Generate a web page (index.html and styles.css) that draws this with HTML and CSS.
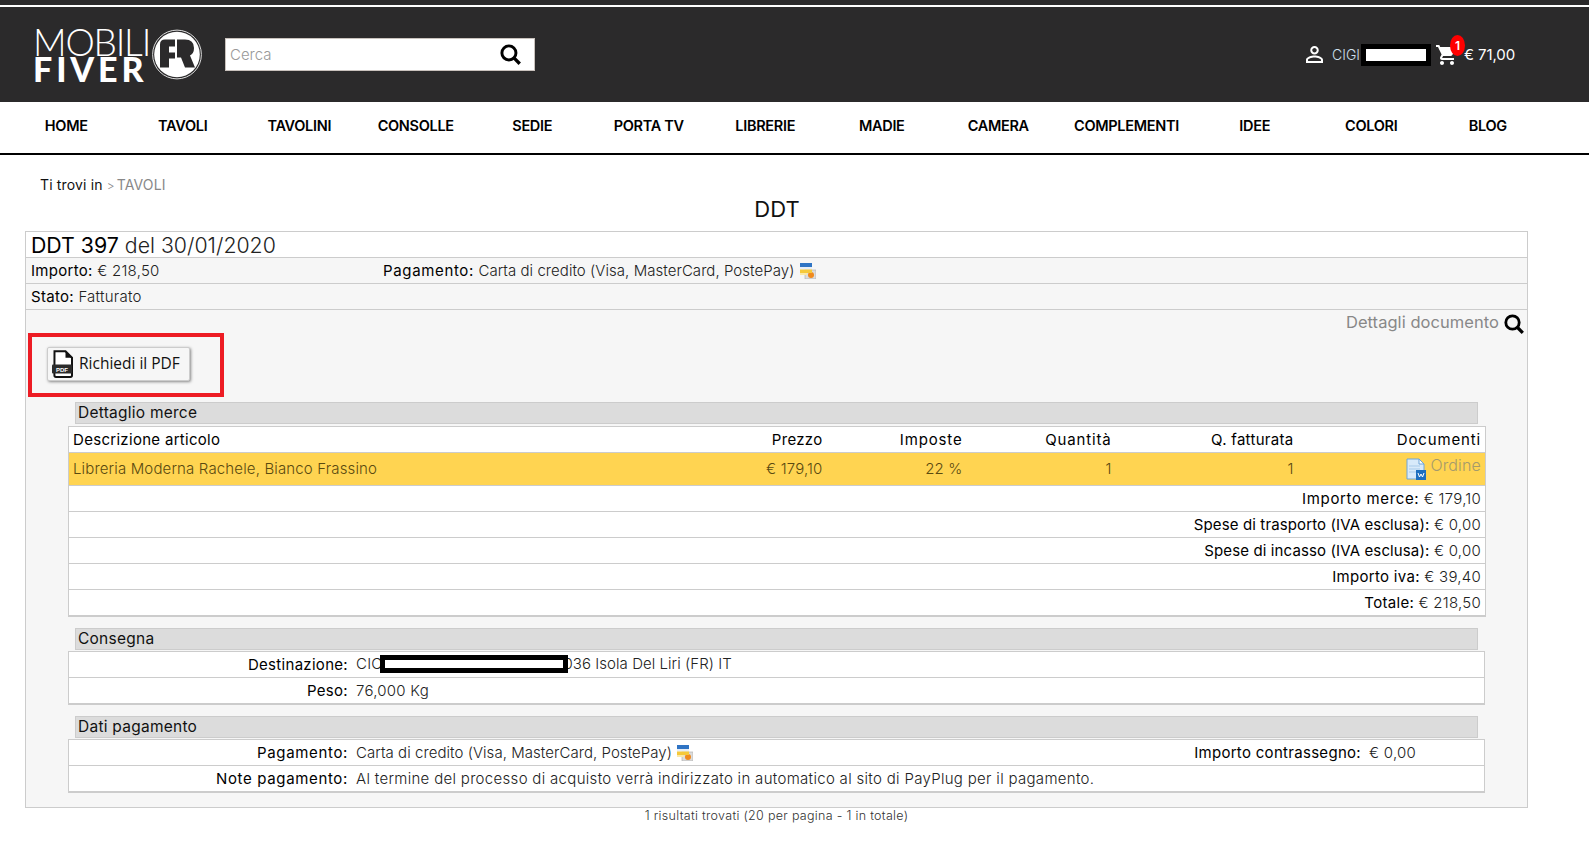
FILE: index.html
```html
<!DOCTYPE html>
<html lang="it">
<head>
<meta charset="utf-8">
<title>DDT 397</title>
<link rel="stylesheet" href="styles.css">
</head>
<body>
<div class="strip"></div>
<header class="top">
  <a class="logo">
    <span class="logo-text"><span class="logo-a">MOBILI</span><span class="logo-b">FIVER</span></span>
    <svg class="logo-mark" viewBox="0 0 50 50" width="50" height="51">
      <circle cx="25" cy="25" r="24.4" fill="none" stroke="#ddd" stroke-width="1"/>
      <circle cx="25" cy="25" r="22.8" fill="#fff"/>
      <path d="M8 38V15q0-5 5-5h10v7H17v6h6v6h-6v9z" fill="#2b2a2b"/>
      <path d="M25 10h8q9 0 9 8.500 0 5.500-4 7.500l5 12H33l-4-10h-4z" fill="#2b2a2b"/>
      <path d="M23.500 10h1.500v18h-1.500zM17 18.500h8v1.500h-8z" fill="#fff"/>
    </svg>
  </a>
  <div class="search">
    <span class="search-ph">Cerca</span>
    <svg class="search-ic" viewBox="0 0 20 20" width="21" height="21"><circle cx="8.500" cy="8.500" r="6.700" fill="none" stroke="#000" stroke-width="2.800"/><path d="M13.500 13.500l5.300 5.300" stroke="#000" stroke-width="3.200"/></svg>
  </div>
  <div class="account">
    <svg class="user-ic" viewBox="4 4 16 16" width="17" height="17"><path fill="#fff" d="M12 5.900c1.160 0 2.100.94 2.100 2.100s-.94 2.100-2.100 2.100S9.900 9.160 9.900 8s.94-2.100 2.100-2.100m0 9c2.970 0 6.100 1.460 6.100 2.100v1.100H5.900V17c0-.64 3.130-2.100 6.100-2.100M12 4C9.790 4 8 5.790 8 8s1.790 4 4 4 4-1.790 4-4-1.790-4-4-4zm0 9c-2.670 0-8 1.340-8 4v3h16v-3c0-2.660-5.330-4-8-4z"/></svg>
    <span class="user-name">CIGI</span>
    <span class="redact-user"></span>
    <span class="cart">
      <svg viewBox="1 2 21 20" width="21" height="20"><path fill="#fff" d="M7 18c-1.100 0-1.990.9-1.990 2S5.900 22 7 22s2-.9 2-2-.9-2-2-2zM1 2v2h2l3.600 7.590-1.350 2.450c-.16.28-.25.61-.25.96 0 1.100.9 2 2 2h12v-2H7.420c-.14 0-.25-.11-.25-.25l.03-.12.9-1.630h7.450c.75 0 1.410-.41 1.750-1.030l3.580-6.490c.08-.14.12-.31.12-.48 0-.55-.45-1-1-1H5.210l-.94-2H1zm16 16c-1.100 0-1.990.9-1.990 2s.89 2 1.990 2 2-.9 2-2-.9-2-2-2z"/></svg>
      <span class="badge">1</span>
    </span>
    <span class="total">€ 71,00</span>
  </div>
</header>
<nav class="nav">
  <a>HOME</a><a>TAVOLI</a><a>TAVOLINI</a><a>CONSOLLE</a><a>SEDIE</a><a>PORTA TV</a><a>LIBRERIE</a><a>MADIE</a><a>CAMERA</a><a class="wide">COMPLEMENTI</a><a>IDEE</a><a>COLORI</a><a>BLOG</a>
</nav>
<main class="main">
  <div class="crumb">Ti trovi in <span class="crumb-sep">&gt;</span> <span class="crumb-cur">TAVOLI</span></div>
  <h1 class="page-title">DDT</h1>
  <section class="panel">
    <div class="doc-title"><span class="doc-num">DDT 397</span> <span class="doc-date">del 30/01/2020</span></div>
    <div class="info-row info-split">
      <div><b>Importo:</b> € 218,50</div>
      <div><b class="wide-l">Pagamento:</b> <span class="tight-v">Carta di credito (Visa, MasterCard, PostePay)</span>
        <svg class="card-ic" viewBox="0 0 16 16" width="16" height="16"><rect x="5" y="7" width="11" height="9" fill="#dcdcdc" stroke="#aaa" stroke-width=".6"/><circle cx="11" cy="12" r="3" fill="#f08a1d"/><rect x="0" y="0" width="12" height="4" fill="#2f74c4"/><rect x="0" y="4" width="12" height="2.500" fill="#e6eef8"/><rect x="0" y="6.500" width="12" height="3.500" fill="#f5c93b"/><rect x="0" y="10" width="7" height="2" fill="#fbe9a6"/></svg>
      </div>
    </div>
    <div class="info-row"><b>Stato:</b> Fatturato</div>
    <div class="detail-link">Dettagli documento
      <svg viewBox="0 0 20 20" width="20" height="20"><circle cx="8.500" cy="8.500" r="6.700" fill="none" stroke="#000" stroke-width="2.800"/><path d="M13.500 13.500l5.300 5.300" stroke="#000" stroke-width="3.200"/></svg>
    </div>
    <div class="pdf-wrap">
      <button class="pdf-btn" type="button">
        <svg viewBox="0 0 22 28" width="22" height="28"><path d="M2.500 1.200h11l6.500 6.500v17.600a1.600 1.600 0 0 1-1.600 1.600H4a1.600 1.600 0 0 1-1.600-1.600z" fill="#fff" stroke="#111" stroke-width="2"/><path d="M13.500 1.200v6.500H20z" fill="#111"/><rect x="0" y="14.500" width="20" height="9" rx="1" fill="#2b2b2b"/><text x="10" y="22" class="pdf-tag" text-anchor="middle">PDF</text></svg>
        <span class="pdf-label">Richiedi il PDF</span>
      </button>
      <div class="annot"></div>
    </div>

    <h2 class="sec sec-first">Dettaglio merce</h2>
    <table class="goods">
      <colgroup><col class="c0"><col class="c1"><col class="c2"><col class="c3"><col class="c4"><col class="c5"></colgroup>
      <tr class="head"><th class="left">Descrizione articolo</th><th>Prezzo</th><th class="wider">Imposte</th><th class="wider">Quantità</th><th>Q. fatturata</th><th class="wider">Documenti</th></tr>
      <tr class="item"><td class="left">Libreria Moderna Rachele, Bianco Frassino</td><td>€ 179,10</td><td>22 %</td><td>1</td><td>1</td>
        <td class="doc-cell"><svg viewBox="0 0 20 22" width="20" height="22"><path d="M1 1h12l5 5v15H1z" fill="#d8eafa" stroke="#6fa5d8"/><path d="M13 1v5h5z" fill="#fff" stroke="#6fa5d8"/><path d="M3 8h11M3 11h11M3 14h7" stroke="#a9cbea"/><rect x="10" y="12" width="10" height="10" fill="#1d6fc0"/><path d="M12 15l1.500 4 1.500-3 1.500 3 1.500-4" stroke="#fff" fill="none"/></svg><span class="doc-link">Ordine</span></td></tr>
      <tr class="sum"><td colspan="6"><b class="wide-l">Importo merce:</b> € 179,10</td></tr>
      <tr class="sum"><td colspan="6"><b class="tight-l">Spese di trasporto (IVA esclusa):</b> € 0,00</td></tr>
      <tr class="sum"><td colspan="6"><b class="tight-l">Spese di incasso (IVA esclusa):</b> € 0,00</td></tr>
      <tr class="sum"><td colspan="6"><b>Importo iva:</b> € 39,40</td></tr>
      <tr class="sum"><td colspan="6"><b>Totale:</b> € 218,50</td></tr>
    </table>

    <h2 class="sec sec-kv">Consegna</h2>
    <div class="kv">
      <div class="kv-row"><b class="kv-l">Destinazione:</b><span class="kv-v">CIC<span class="redact-addr"></span><span class="tight-v">036 Isola Del Liri (FR) IT</span></span></div>
      <div class="kv-row"><b class="kv-l">Peso:</b><span class="kv-v">76,000 Kg</span></div>
    </div>

    <h2 class="sec sec-kv">Dati pagamento</h2>
    <div class="kv">
      <div class="kv-row"><b class="kv-l wide-l">Pagamento:</b><span class="kv-v kv-grow tight-v">Carta di credito (Visa, MasterCard, PostePay)
        <svg class="card-ic" viewBox="0 0 16 16" width="16" height="16"><rect x="5" y="7" width="11" height="9" fill="#dcdcdc" stroke="#aaa" stroke-width=".6"/><circle cx="11" cy="12" r="3" fill="#f08a1d"/><rect x="0" y="0" width="12" height="4" fill="#2f74c4"/><rect x="0" y="4" width="12" height="2.500" fill="#e6eef8"/><rect x="0" y="6.500" width="12" height="3.500" fill="#f5c93b"/><rect x="0" y="10" width="7" height="2" fill="#fbe9a6"/></svg></span>
        <b class="kv-l2">Importo contrassegno:</b><span class="kv-v2">€ 0,00</span></div>
      <div class="kv-row"><b class="kv-l wide-l">Note pagamento:</b><span class="kv-v note-v">Al termine del processo di acquisto verrà indirizzato in automatico al sito di PayPlug per il pagamento.</span></div>
    </div>
  </section>
  <p class="results">1 risultati trovati (20 per pagina - 1 in totale)</p>
</main>
</body>
</html>
```
FILE: styles.css
```css
* { box-sizing: border-box; }
html, body { margin: 0; padding: 0; background: #fff; }
body { font-family: Inter, "Open Sans", sans-serif; font-size: 15px; font-weight: 300; letter-spacing: .25px; color: #222; height: 855px; overflow: hidden; }
b { font-weight: 400; color: #000; letter-spacing: .3px; }
b.wide-l { letter-spacing: .65px; }
b.tight-l { letter-spacing: .12px; }
.tight-v { letter-spacing: .05px; }
.note-v { letter-spacing: .31px; }

.strip { height: 5px; background: #2b2a2b; }
.top { height: 97px; border-top: 2px solid #fff; background: #2b2a2b; display: flex; align-items: center; padding: 0 74px 0 33px; letter-spacing: 0; }
.logo { display: flex; align-items: center; color: #fff; }
.logo-text { display: flex; flex-direction: column; width: 115px; margin-top: -1px; }
.logo-a { font-family: Lato, sans-serif; font-weight: 300; font-size: 37px; line-height: 28px; letter-spacing: -1.200px; }
.logo-b { font-family: Lato, sans-serif; font-weight: 900; font-size: 34px; line-height: 25px; letter-spacing: 3.900px; }
.logo-mark { margin-left: 4px; }
.search { margin-left: 23px; width: 310px; height: 33px; background: #fff; border: 1px solid #c9c2bd; display: flex; align-items: center; justify-content: space-between; padding: 0 13px 0 4px; }
.search-ph { color: #999; font-size: 15px; }
.account { margin-left: auto; display: flex; align-items: center; color: #fff; }
.user-name { margin-left: 9px; font-size: 14px; color: #cfe0f0; width: 29px; }
.redact-user { width: 70px; height: 22px; background: #fff; border: 5px solid #000; }
.cart { position: relative; display: flex; margin-left: 5px; }
.badge { position: absolute; left: 14px; top: -10px; width: 15px; height: 21px; border-radius: 50%; background: #f00; color: #fff; font-size: 12px; font-weight: 600; text-align: center; line-height: 21px; }
.total { margin-left: 7px; font-size: 15px; font-weight: 400; letter-spacing: -.1px; }

.nav { height: 53px; border-bottom: 2px solid #000; display: flex; padding-left: 8px; }
.nav a { flex: 0 0 116.500px; display: flex; align-items: center; justify-content: center; color: #000; font-weight: 600; font-size: 14.500px; letter-spacing: -.3px; padding-bottom: 4px; }
.nav a.wide { flex-basis: 140px; }

.main { margin-left: 25px; width: 1503px; }
.crumb { margin: 21px 0 0 15px; height: 18px; line-height: 18px; font-size: 14px; color: #111; font-weight: 400; letter-spacing: .15px; }
.crumb-sep { color: #888; font-size: 12px; font-weight: 300; }
.crumb-cur { color: #888; font-weight: 400; margin-left: -2px; letter-spacing: .1px; }
.page-title { margin: 1px 0 0; height: 28px; line-height: 28px; text-align: center; font-size: 22px; font-weight: 400; color: #111; letter-spacing: 0; padding-left: 1px; }

.panel { margin-top: 8px; height: 577px; border: 1px solid #ccc; background: #f6f6f6; }
.doc-title { height: 26px; line-height: 26px; background: #fff; border-bottom: 1px solid #ccc; padding-left: 5px; font-size: 21.300px; letter-spacing: 0; }
.doc-num { color: #000; font-weight: 400; }
.doc-date { font-weight: 300; color: #222; }
.info-row { height: 26px; line-height: 25px; border-bottom: 1px solid #ccc; padding-left: 5px; }
.info-split { display: grid; grid-template-columns: 352px 1fr; }
.card-ic { vertical-align: -3px; margin-left: 1px; }
.detail-link { display: flex; justify-content: flex-end; align-items: center; gap: 5px; height: 24px; padding: 0 3px 0 0; color: #888; font-size: 16.500px; font-weight: 400; letter-spacing: .05px; }
.detail-link svg { margin-top: 3px; }
.pdf-wrap { position: relative; height: 63px; padding: 13px 0 0 21px; }
.pdf-btn { display: flex; align-items: center; gap: 5px; width: 143px; height: 34px; padding: 0 0 0 4px; background: #f6f6f6; border: 1px solid #ccc; border-radius: 2px; box-shadow: 1px 1px 3px rgba(0,0,0,.45); font: 400 15.500px "Open Sans", sans-serif; color: #111; }
.pdf-label { padding-bottom: 3px; }
.pdf-tag { font: 700 6px "Liberation Sans", sans-serif; fill: #fff; }
.annot { position: absolute; left: 2px; top: -1px; width: 196px; height: 64px; border: 4px solid #ed1c24; }

.sec { margin: 0 0 2px 49px; width: 1403px; height: 22px; line-height: 20px; padding-left: 2px; background: #dcdcdc; border: 1px solid #ccc; font-size: 15.500px; font-weight: 400; color: #111; letter-spacing: .25px; }
.sec-kv { margin-bottom: 1px; }
.sec-first { margin-top: 5px; }
.goods { margin: 0 0 0 42px; width: 1417px; border-collapse: collapse; table-layout: fixed; background: #fff; border: 1px solid #ccc; border-bottom-width: 2px; }
.c0 { width: 600px; } .c1 { width: 158px; } .c2 { width: 140px; } .c3 { width: 149px; } .c4 { width: 182px; } .c5 { width: 188px; }
.goods th, .goods td { padding: 0 4px; text-align: right; height: 26px; border-bottom: 1px solid #ccc; font-weight: 300; white-space: nowrap; }
.goods th { font-weight: 400; color: #000; letter-spacing: .3px; }
.goods th.wider { letter-spacing: .85px; }
.goods .left { text-align: left; }
.item td { height: 33px; background: #ffd451; color: #5a4a10; letter-spacing: .15px; padding-bottom: 2px; }
.doc-cell svg { vertical-align: -7px; margin-right: 4px; }
.doc-link { color: #a49a6c; font-size: 16px; position: relative; top: -2px; }
.goods + .sec { margin-top: 11px; }
.kv { margin-left: 42px; width: 1417px; background: #fff; border: 1px solid #ccc; border-bottom-width: 2px; }
.kv + .sec { margin-top: 11px; }
.kv-row { display: flex; align-items: center; height: 26px; border-bottom: 1px solid #ccc; }
.kv-row:last-child { border-bottom: 0; height: 25px; }
.kv-l { flex: 0 0 279px; text-align: right; }
.kv-v { margin-left: 8px; white-space: nowrap; }
.kv-grow { flex: 0 0 805px; }
.kv-l2 { flex: 0 0 200px; text-align: right; }
.kv-v2 { margin-left: 8px; }
.redact-addr { display: inline-block; vertical-align: middle; width: 188px; height: 18px; margin: 0 -4px 0 -3px; background: #fff; border: 5px solid #000; position: relative; top: -1px; }
.results { margin: -1px 0 0; text-align: center; font-size: 12.500px; letter-spacing: .3px; color: #333; line-height: 18px; }
```
